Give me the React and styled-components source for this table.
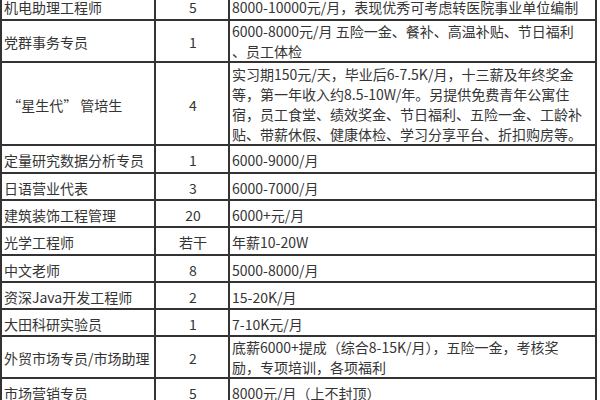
import React from "react";
import styled, { createGlobalStyle } from "styled-components";

const Global = createGlobalStyle`
  html, body { margin: 0; padding: 0; background: #fff; }
  body { font-family: "Noto Sans CJK SC", "Noto Sans", sans-serif; color: #353535; }
`;

const Page = styled.div`
  width: 600px;
  height: 400px;
  overflow: hidden;
  background: #fff;
`;

const Table = styled.table`
  margin-top: -7px;
  width: 597px;
  table-layout: fixed;
  border-collapse: separate;
  border-spacing: 0;
  border-left: 2px solid #333;
  font-size: 14px;
  line-height: 20px;
`;

const Row = styled.tr`
  height: ${(p) => p.$h}px;
`;

const Cell = styled.td`
  box-sizing: border-box;
  padding: ${(p) => (p.$multi ? "0 0 0 2px" : "2px 0 0 2px")};
  border-right: 2px solid #333;
  border-bottom: 2px solid #333;
  vertical-align: middle;
  white-space: nowrap;
  overflow: hidden;
  width: ${(p) => p.$w}px;
  text-align: ${(p) => (p.$center ? "center" : "left")};
  line-height: 20px;
`;

const Line = styled.div`
  white-space: nowrap;
`;

const Title = styled.span`
  white-space: pre;
`;

const rows = [
  { t: "机电助理工程师", n: "5", l: ["8000-10000元/月，表现优秀可考虑转医院事业单位编制"], h: 28 },
  { t: "党群事务专员", n: "1", l: ["6000-8000元/月 五险一金、餐补、高温补贴、节日福利", "、员工体检"], h: 42 },
  {
    t: " “星生代” 管培生",
    n: "4",
    l: [
      "实习期150元/天，毕业后6-7.5K/月，十三薪及年终奖金",
      "等，第一年收入约8.5-10W/年。另提供免费青年公寓住",
      "宿，员工食堂、绩效奖金、节日福利、五险一金、工龄补",
      "贴、带薪休假、健康体检、学习分享平台、折扣购房等。",
    ],
    h: 83,
  },
  { t: "定量研究数据分析专员", n: "1", l: ["6000-9000/月"], h: 28 },
  { t: "日语营业代表", n: "3", l: ["6000-7000/月"], h: 27 },
  { t: "建筑装饰工程管理", n: "20", l: ["6000+元/月"], h: 27 },
  { t: "光学工程师", n: "若干", l: ["年薪10-20W"], h: 28 },
  { t: "中文老师", n: "8", l: ["5000-8000/月"], h: 27 },
  { t: "资深Java开发工程师", n: "2", l: ["15-20K/月"], h: 27 },
  { t: "大田科研实验员", n: "1", l: ["7-10K元/月"], h: 27 },
  {
    t: "外贸市场专员/市场助理",
    n: "2",
    l: ["底薪6000+提成（综合8-15K/月），五险一金，考核奖", "励，专项培训，各项福利"],
    h: 42,
  },
  { t: "市场营销专员", n: "5", l: ["8000元/月（上不封顶）"], h: 28 },
];

export default function App() {
  return (
    <Page>
      <Global />
      <Table>
        <tbody>
          {rows.map((r, i) => (
            <Row key={i} $h={r.h}>
              <Cell $w={154}>
                <Title>{r.t}</Title>
              </Cell>
              <Cell $w={74} $center>
                {r.n}
              </Cell>
              <Cell $w={367} $multi={r.l.length > 1}>
                {r.l.map((x, j) => (
                  <Line key={j}>{x}</Line>
                ))}
              </Cell>
            </Row>
          ))}
        </tbody>
      </Table>
    </Page>
  );
}
